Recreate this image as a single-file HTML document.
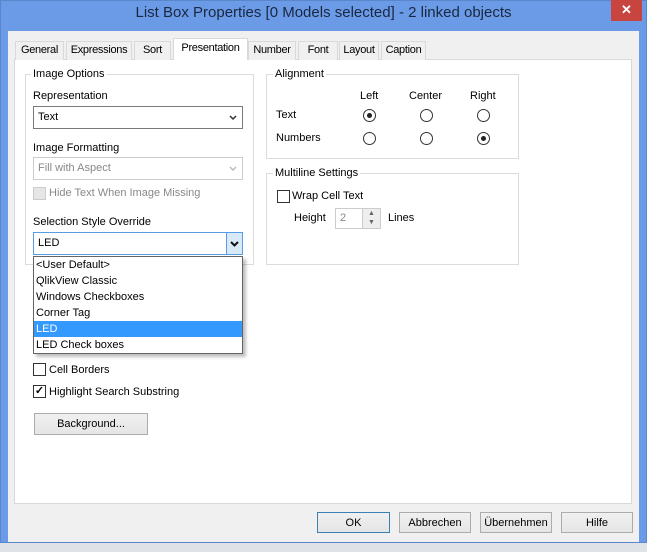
<!DOCTYPE html>
<html><head><meta charset="utf-8"><style>
*{box-sizing:border-box;margin:0;padding:0}
body{width:647px;height:552px;background:#dfe3e8;font-family:"Liberation Sans",sans-serif;font-size:11px;color:#000;position:relative;overflow:hidden}
.a{position:absolute}
.win{left:0;top:0;width:647px;height:543px;background:#6b9be6;border:1px solid #5a87cc}
.title{left:0;top:4px;width:647px;text-align:center;font-size:15px;color:#1a2740}
.close{left:611px;top:0;width:31px;height:21px;background:#c7453e;color:#fff;font-size:13px;text-align:center;line-height:20px;font-weight:bold}
.body{left:8px;top:31px;width:631px;height:511px;background:#f0f0f0}
.panel{left:14px;top:59px;width:618px;height:445px;background:#fff;border:1px solid #d9d9d9}
.tab{top:41px;height:19px;border:1px solid #d9d9d9;border-bottom:none;background:#f0f0f0;text-align:center;line-height:17px;letter-spacing:-0.3px;white-space:nowrap}
.tab.sel{top:38px;height:22px;background:#fff;z-index:2;line-height:19px}
.grp{border:1px solid #dcdcdc}
.gl{background:#fff;padding:0 2px}
.combo{border:1px solid #7a7a7a;background:#fff;height:23px;line-height:21px;padding-left:4px}
.dis{border-color:#ccc;color:#888;background:#fff}
.chk{width:13px;height:13px;border:1px solid #333;background:#fff}
.radio{width:13px;height:13px;border:1px solid #333;border-radius:50%;background:#fff}
.radio.on::after{content:"";position:absolute;left:3px;top:3px;width:5px;height:5px;border-radius:50%;background:#222}
.btn{height:21px;border:1px solid #acacac;background:linear-gradient(#f0f0f0,#e5e5e5);text-align:center;line-height:20px}
.list div{height:16px;line-height:16px;padding-left:2px}
.chev{position:absolute;right:5px;top:8px}
</style></head><body>
<div class="a win"></div>
<div class="a title">List Box Properties [0 Models selected] - 2 linked objects</div>
<div class="a close">✕</div>
<div class="a body"></div>
<div class="a panel"></div>
<div class="a tab" style="left:15px;width:49px">General</div>
<div class="a tab" style="left:66px;width:66px">Expressions</div>
<div class="a tab" style="left:134px;width:37px">Sort</div>
<div class="a tab sel" style="left:173px;width:75px">Presentation</div>
<div class="a tab" style="left:248px;width:48px">Number</div>
<div class="a tab" style="left:298px;width:40px">Font</div>
<div class="a tab" style="left:339px;width:40px">Layout</div>
<div class="a tab" style="left:381px;width:45px">Caption</div>

<div class="a grp" style="left:25px;top:74px;width:229px;height:191px"></div>
<div class="a gl" style="left:31px;top:68px">Image Options</div>
<div class="a" style="left:33px;top:90px">Representation</div>
<div class="a combo" style="left:33px;top:106px;width:210px">Text<svg class="chev" width="8" height="6"><path d="M1 1L4 4L7 1" stroke="#333" stroke-width="1.5" fill="none"/></svg></div>
<div class="a" style="left:33px;top:142px">Image Formatting</div>
<div class="a combo dis" style="left:33px;top:157px;width:210px">Fill with Aspect<svg class="chev" width="8" height="6"><path d="M1 1L4 4L7 1" stroke="#bbb" stroke-width="1.5" fill="none"/></svg></div>
<div class="a chk" style="left:33px;top:187px;border-color:#ccc;background:#e6e6e6"></div>
<div class="a" style="left:49px;top:187px;color:#888">Hide Text When Image Missing</div>
<div class="a" style="left:33px;top:216px">Selection Style Override</div>
<div class="a combo" style="left:33px;top:232px;width:210px;border-color:#569de5">LED<span class="a" style="right:0;top:0;width:16px;height:21px;background:#d8e9f8;border-left:1px solid #569de5"><svg style="position:absolute;left:3px;top:8px" width="9" height="6"><path d="M1 1L4.5 4.5L8 1" stroke="#111" stroke-width="2" fill="none"/></svg></span></div>
<div class="a list" style="left:33px;top:256px;width:210px;height:98px;border:1px solid #646464;background:#fff;box-shadow:3px 3px 3px rgba(0,0,0,.25);z-index:3">
<div>&lt;User Default&gt;</div><div>QlikView Classic</div><div>Windows Checkboxes</div><div>Corner Tag</div><div style="background:#3399ff;color:#fff">LED</div><div>LED Check boxes</div></div>

<div class="a grp" style="left:266px;top:74px;width:253px;height:85px"></div>
<div class="a gl" style="left:273px;top:68px">Alignment</div>
<div class="a" style="left:360px;top:90px">Left</div>
<div class="a" style="left:409px;top:90px">Center</div>
<div class="a" style="left:470px;top:90px">Right</div>
<div class="a" style="left:276px;top:109px">Text</div>
<div class="a" style="left:276px;top:132px">Numbers</div>
<div class="a radio on" style="left:363px;top:109px"></div>
<div class="a radio" style="left:420px;top:109px"></div>
<div class="a radio" style="left:477px;top:109px"></div>
<div class="a radio" style="left:363px;top:132px"></div>
<div class="a radio" style="left:420px;top:132px"></div>
<div class="a radio on" style="left:477px;top:132px"></div>

<div class="a grp" style="left:266px;top:173px;width:253px;height:92px"></div>
<div class="a gl" style="left:273px;top:167px">Multiline Settings</div>
<div class="a chk" style="left:277px;top:190px"></div>
<div class="a" style="left:292px;top:190px">Wrap Cell Text</div>
<div class="a" style="left:294px;top:212px">Height</div>
<div class="a" style="left:335px;top:208px;width:46px;height:21px;border:1px solid #ccc;color:#888;padding:3px 0 0 4px">2</div>
<div class="a" style="left:362px;top:209px;width:18px;height:19px;background:#eee;border-left:1px solid #ccc;font-size:7px;text-align:center;line-height:9px;color:#666">▲<br>▼</div>
<div class="a" style="left:388px;top:212px">Lines</div>

<div class="a chk" style="left:33px;top:363px"></div>
<div class="a" style="left:49px;top:364px">Cell Borders</div>
<div class="a chk" style="left:33px;top:385px;font-size:11px;line-height:11px;text-align:center;font-weight:bold">✓</div>
<div class="a" style="left:49px;top:386px">Highlight Search Substring</div>
<div class="a btn" style="left:34px;top:413px;width:114px;height:22px">Background...</div>

<div class="a btn" style="left:317px;top:512px;width:73px;border-color:#3c7fb1">OK</div>
<div class="a btn" style="left:399px;top:512px;width:72px">Abbrechen</div>
<div class="a btn" style="left:480px;top:512px;width:72px">Übernehmen</div>
<div class="a btn" style="left:561px;top:512px;width:72px">Hilfe</div>
</body></html>
